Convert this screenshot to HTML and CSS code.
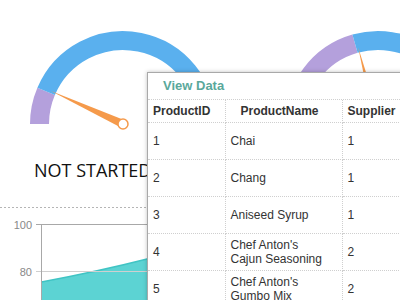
FILE: index.html
```html
<!DOCTYPE html>
<html>
<head>
<meta charset="utf-8">
<link rel="stylesheet" href="styles.css">
</head>
<body>
<div class="page">
  <div class="gauges">
    <div class="gauge">
      <svg width="255" height="130" viewBox="0 0 255 130">
        <path class="arc arc-done" d="M39.5 124 A83.5 83.5 0 0 1 46.14 91.38"/>
        <path class="arc arc-rest" d="M46.14 91.38 A83.5 83.5 0 0 1 206.5 124"/>
        <polygon class="needle" points="51,91 124.67,120.36 121.33,127.64"/>
        <circle class="hub" cx="123" cy="124" r="5"/>
      </svg>
    </div>
    <div class="gauge">
      <svg width="255" height="130" viewBox="0 0 255 130">
        <path class="arc arc-done" d="M39.5 124 A83.5 83.5 0 0 1 99.99 43.73"/>
        <path class="arc arc-rest" d="M99.99 43.73 A83.5 83.5 0 0 1 206.5 124"/>
        <polygon class="needle" points="103.2,47.5 126.87,123 119.13,125"/>
        <circle class="hub" cx="123" cy="124" r="5"/>
      </svg>
    </div>
  </div>
  <div class="captions">
    <div class="caption">NOT STARTED</div>
  </div>
  <div class="separator"></div>
  <svg class="chart" width="400" height="92" viewBox="0 0 400 92">
    <path class="area" d="M41.5 74 Q100 63 147 51 T260 18 L260 92 L41.5 92 Z"/>
    <path class="area-line" d="M41.5 74 Q100 63 147 51 T260 18"/>
    <line class="grid grid-top" x1="36" y1="16.5" x2="400" y2="16.5"/>
    <line class="grid" x1="36" y1="63.5" x2="400" y2="63.5"/>
    <line class="axis" x1="41.5" y1="16" x2="41.5" y2="92"/>
    <text class="tick-label" x="32" y="20.5">100</text>
    <text class="tick-label" x="32" y="67.5">80</text>
  </svg>
</div>

<div class="popup">
  <div class="popup-title">View Data</div>
  <table class="data">
    <colgroup>
      <col class="c-id"><col class="c-name"><col class="c-sup">
    </colgroup>
    <thead>
      <tr><th>ProductID</th><th class="th-name">ProductName</th><th>Supplier</th></tr>
    </thead>
    <tbody>
      <tr><td>1</td><td>Chai</td><td>1</td></tr>
      <tr><td>2</td><td>Chang</td><td>1</td></tr>
      <tr><td>3</td><td>Aniseed Syrup</td><td>1</td></tr>
      <tr><td>4</td><td>Chef Anton's Cajun Seasoning</td><td>2</td></tr>
      <tr><td>5</td><td>Chef Anton's Gumbo Mix</td><td>2</td></tr>
    </tbody>
  </table>
</div>
</body>
</html>
```
FILE: styles.css
```css
html, body {
  margin: 0;
  padding: 0;
  background: #fff;
  overflow: hidden;
  width: 400px;
  height: 300px;
}
body {
  position: relative;
  font-family: "Liberation Sans", Arial, sans-serif;
}
.page {
  width: 510px;
}
.gauges {
  display: flex;
  height: 130px;
}
.gauge {
  width: 255px;
  flex: none;
}
.gauge svg {
  display: block;
}
.arc {
  fill: none;
  stroke-width: 19;
}
.arc-done { stroke: #b4a0dc; }
.arc-rest { stroke: #5ab0ee; }
.needle { fill: #f59a4b; }
.hub {
  fill: #fff;
  stroke: #f59a4b;
  stroke-width: 1.5;
}
.captions {
  display: flex;
  height: 77px;
  box-sizing: border-box;
  padding-top: 28px;
}
.caption {
  width: 255px;
  flex: none;
  box-sizing: border-box;
  padding-left: 34px;
  font-family: "Open Sans", sans-serif;
  font-size: 18px;
  line-height: 24px;
  color: #111;
}
.separator {
  height: 1px;
  width: 400px;
  background: repeating-linear-gradient(to right, #b5b5b5 0 2px, transparent 2px 4px);
}
.chart {
  display: block;
}
.area { fill: #5cd3d3; }
.area-line {
  fill: none;
  stroke: #40c4c4;
  stroke-width: 1.5;
}
.grid {
  stroke: #cfcfcf;
  stroke-width: 1;
}
.grid-top { stroke: #a8a8a8; }
.axis {
  stroke: #a8a8a8;
  stroke-width: 1;
}
.tick-label {
  font-family: "Liberation Sans", Arial, sans-serif;
  font-size: 11px;
  fill: #888;
  text-anchor: end;
}

.popup {
  position: absolute;
  left: 147px;
  top: 72px;
  width: 320px;
  height: 260px;
  background: #fff;
  border: 1px solid #a9a9a9;
  box-shadow: 0 0 4px rgba(0, 0, 0, 0.25);
}
.popup-title {
  height: 26px;
  line-height: 26px;
  padding-left: 15px;
  font-size: 13px;
  font-weight: bold;
  color: #5aa89b;
  border-bottom: 1px dotted #cfcfcf;
}
.data {
  border-collapse: collapse;
  table-layout: fixed;
  width: 290px;
  font-size: 12px;
  color: #333;
}
.c-id { width: 77px; }
.c-name { width: 117px; }
.c-sup { width: 96px; }
.data th, .data td {
  padding: 0 12px 0 5px;
  text-align: left;
  vertical-align: middle;
  border-bottom: 1px dotted #cfcfcf;
  border-right: 1px dotted #cfcfcf;
  line-height: 14px;
}
.data th {
  height: 22px;
  font-weight: bold;
}
.data th.th-name {
  padding-left: 15px;
}
.data td {
  height: 36px;
}
```
